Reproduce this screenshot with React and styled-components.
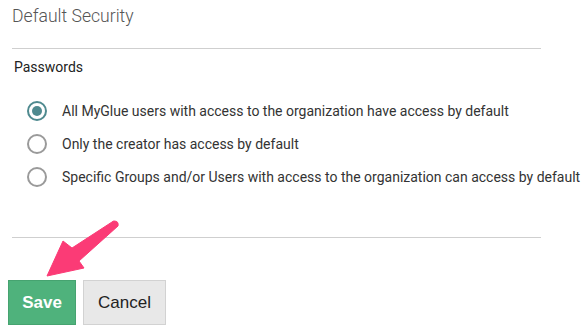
import React from "react";
import styled, { createGlobalStyle } from "styled-components";

const Global = createGlobalStyle`
  html, body { margin: 0; padding: 0; background: #fff; }
  body { font-family: Roboto, "Noto Sans", sans-serif; }
`;

const Page = styled.div`
  position: relative;
  width: 586px;
  height: 336px;
  overflow: hidden;
  background: #fff;
`;

const Section = styled.div`
  margin-left: 12px;
  width: 529px;
`;

const Title = styled.h2`
  margin: 0;
  padding-top: 5px;
  height: 48px;
  box-sizing: border-box;
  font-size: 17.6px;
  font-weight: 300;
  color: #555;
  line-height: 22px;
`;

const Rule = styled.hr`
  margin: 0;
  border: 0;
  border-top: 1px solid #cfcfcf;
  height: 0;
`;

const Label = styled.div`
  margin: 9px 0 0 2px;
  font-size: 14px;
  color: #222;
  line-height: 18px;
`;

const Options = styled.div`
  display: flex;
  flex-direction: column;
  gap: 13px;
  margin-top: 25px;
  margin-left: 15px;
  height: 136px;
`;

const Option = styled.label`
  display: flex;
  align-items: center;
  gap: 15px;
  height: 20px;
  white-space: nowrap;
  font-size: 14px;
  color: #333;
`;

const Radio = styled.span`
  box-sizing: border-box;
  width: 20px;
  height: 20px;
  flex: none;
  border-radius: 50%;
  border: 2px solid ${(p) => (p.$checked ? "#4f8a8f" : "#9a9a9a")};
  display: flex;
  align-items: center;
  justify-content: center;
  &::after {
    content: "";
    display: ${(p) => (p.$checked ? "block" : "none")};
    width: 10px;
    height: 10px;
    border-radius: 50%;
    background: #4f8a8f;
  }
`;

const Buttons = styled.div`
  display: flex;
  gap: 7px;
  margin: 42px 0 0 8px;
`;

const Button = styled.button`
  box-sizing: border-box;
  height: 45px;
  padding: 0;
  font-family: "Liberation Sans", Arial, sans-serif;
  font-size: 17px;
  border-radius: 0;
  cursor: pointer;
  width: ${(p) => (p.$primary ? "68px" : "83px")};
  font-weight: ${(p) => (p.$primary ? 700 : 400)};
  color: ${(p) => (p.$primary ? "#fff" : "#222")};
  background: ${(p) => (p.$primary ? "#4fb27c" : "#e8e8e8")};
  border: 1px solid ${(p) => (p.$primary ? "#46a370" : "#d2d2d2")};
`;

const Arrow = styled.svg`
  position: absolute;
  left: 0;
  top: 0;
  pointer-events: none;
`;

const options = [
  "All MyGlue users with access to the organization have access by default",
  "Only the creator has access by default",
  "Specific Groups and/or Users with access to the organization can access by default",
];

export default function App() {
  return (
    <Page>
      <Global />
      <Section>
        <Title>Default Security</Title>
        <Rule />
        <Label>Passwords</Label>
        <Options>
          {options.map((o, i) => (
            <Option key={i}>
              <Radio $checked={i === 0} />
              {o}
            </Option>
          ))}
        </Options>
        <Rule />
      </Section>
      <Buttons>
        <Button $primary>Save</Button>
        <Button>Cancel</Button>
      </Buttons>
      <Arrow width="586" height="336" viewBox="0 0 586 336">
        <path
          d="M114 221 Q119 221 118 226 L79 261 L84 268 L47 276 L63 241 L72 248 L112 222 Q113 221 114 221 Z"
          fill="#fb3b76"
          stroke="#fb3b76"
          strokeWidth="1"
          strokeLinejoin="round"
        />
      </Arrow>
    </Page>
  );
}
